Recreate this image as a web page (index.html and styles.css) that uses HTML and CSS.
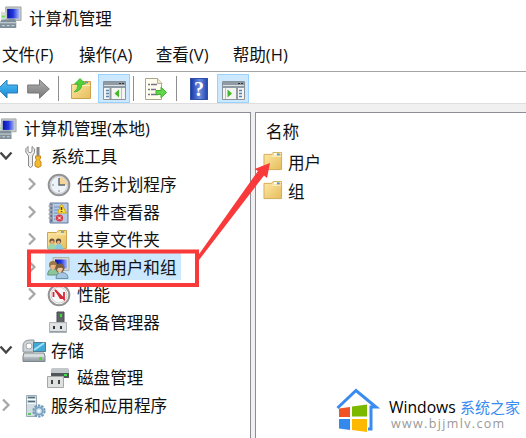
FILE: index.html
```
<!DOCTYPE html>
<html lang="zh-CN">
<head>
<meta charset="utf-8">
<title>计算机管理</title>
<link rel="stylesheet" href="styles.css">
</head>
<body>
<svg class="defs" width="0" height="0">
  <defs>
    <linearGradient id="gold" x1="0" y1="0" x2="1" y2="1"><stop offset="0" stop-color="#ffe9a6"/><stop offset="1" stop-color="#e5bd5c"/></linearGradient>
    <linearGradient id="screen" x1="0" y1="0" x2="1" y2="0"><stop offset="0" stop-color="#0716a8"/><stop offset=".5" stop-color="#2336dc"/><stop offset="1" stop-color="#a5b8fa"/></linearGradient>
    <linearGradient id="steel" x1="0" y1="0" x2="0" y2="1"><stop offset="0" stop-color="#e4e7e9"/><stop offset="1" stop-color="#8c979f"/></linearGradient>
    <linearGradient id="blue" x1="0" y1="0" x2="0" y2="1"><stop offset="0" stop-color="#56c4f5"/><stop offset="1" stop-color="#1685d6"/></linearGradient>
    <linearGradient id="grey" x1="0" y1="0" x2="0" y2="1"><stop offset="0" stop-color="#b0b0b0"/><stop offset="1" stop-color="#777"/></linearGradient>
    <symbol id="computer" viewBox="0 0 24 24">
      <path d="M7 1h16v14H7z" fill="#c9ccc8" stroke="#a0a5a6"/>
      <path d="M8.500 3H21v10H8.500z" fill="url(#screen)"/>
      <path d="M2 6h5v8H2z" fill="#d9ddd8"/><path d="M3 10h3v2H3z" fill="#65e34e"/>
      <path d="M10 14h7v3h-7z" fill="#6e7d85"/>
      <path d="M2 15q0-1 2-1h11q3 0 3 3v6H1v-6z" fill="#80909a"/>
      <path d="M1 17.500h17M3 20.500h3M8 20.500h3M13 20.500h3" stroke="#d7dfe2"/>
    </symbol>
    <symbol id="folder" viewBox="0 0 20 20">
      <path d="M.5 2.500h8l1.500-2h9v18H.5z" fill="url(#gold)" stroke="#d2aa53"/>
      <path d="M8.500 4.500h10M10.500 1.500h8" stroke="#fff3cc"/><path d="M14 1.500h3v2h-3z" fill="#5695be"/><path d="M11 1.500h3v2h-3z" fill="#fff"/>
    </symbol>
    <symbol id="down" viewBox="0 0 14 10"><path d="M1.500 1.500 7 7.500l5.500-6" fill="none" stroke="#444" stroke-width="2.300"/></symbol>
    <symbol id="right" viewBox="0 0 10 14"><path d="m2 1.500 5.500 5.500L2 12.500" fill="none" stroke="#a6a6a6" stroke-width="2.200"/></symbol>
  </defs>
</svg>

<header class="titlebar">
  <svg class="title-icon" width="23" height="23"><use href="#computer"/></svg>
  <span>计算机管理</span>
</header>
<nav class="menu">
  <span>文件<i>(F)</i></span><span>操作<i>(A)</i></span><span>查看<i>(V)</i></span><span>帮助<i>(H)</i></span>
</nav>

<div class="toolbar">
  <svg class="back" width="18" height="20" viewBox="0 0 18 20"><path d="M-2 10 7 1v5h10.500v8H7v5z" fill="url(#blue)" stroke="#287db5"/></svg>
  <svg class="forward" width="23" height="20" viewBox="0 0 23 20"><path d="M22.300 10 12.500.8V6H.7v8h11.800v5.200z" fill="url(#grey)" stroke="#777"/></svg>
  <b class="sep s1"></b>
  <svg class="up" width="20" height="22" viewBox="0 0 20 22"><path d="M.5 6.500h9l2-3h8v17H.5z" fill="url(#gold)" stroke="#cda14c"/><path d="M10 7.500h9" stroke="#fff0b8"/><path d="M14 4.500h3" stroke="#5695be" stroke-width="1.500"/><path d="M3 14q4-2 4-8H3.500L9 .500 14.500 6 11 6.500q-1 7-8 7.500z" fill="#4ed238" stroke="#33a926" stroke-width=".7"/></svg>
  <span class="toggle">
    <svg width="23" height="19" viewBox="0 0 23 19"><path d="M.5.5h22v18H.5z" fill="#f4f4f2" stroke="#8b9298"/><path d="M1 1h21v6H1z" fill="#8e9ba5"/><path d="M1 4.500h21" stroke="#dce1e4"/><path d="M16 2.500h2m1 0h2" stroke="#333"/><path d="M7.500 7v11" stroke="#929a9f" stroke-width="2"/><path d="M3 9.500h3M3 12.500h3M3 15.500h3" stroke="#5484b3" stroke-width="1.500"/><path d="M16 8.500v8l-4.500-4z" fill="#43b929"/><path d="M18.500 7v11" stroke="#bfc2c3"/></svg>
  </span>
  <b class="sep s2"></b>
  <svg class="export" width="22" height="22" viewBox="0 0 22 22"><path d="M.5.500h12l4 4v17H.5z" fill="#fffdee" stroke="#aaa58c"/><path d="M12.500.500v5h5" fill="#eee8cf" stroke="#b5b09a"/><path d="M3 6.500h2m1 0h6M3 11.500h2m1 0h5M3 16.500h2m1 0h7" stroke="#77738a" stroke-width="1.300"/><path d="M11 12.500h5v-3.300l5.500 5.300-5.500 5.300v-3.300h-5z" fill="#62d64b" stroke="#42b22e"/></svg>
  <b class="sep s3"></b>
  <span class="help">?</span>
  <span class="toggle second">
    <svg width="23" height="19" viewBox="0 0 23 19"><path d="M.5.5h22v18H.5z" fill="#f4f4f2" stroke="#8b9298"/><path d="M1 1h21v6H1z" fill="#8e9ba5"/><path d="M1 4.500h21" stroke="#dce1e4"/><path d="M16 2.500h2m1 0h2" stroke="#333"/><path d="M15 7v11" stroke="#929a9f" stroke-width="2"/><path d="M17 9.500h3M17 12.500h3M17 15.500h3" stroke="#5484b3" stroke-width="1.500"/><path d="M5.500 8.500v8l4.500-4z" fill="#43b929"/><path d="M3.500 7v11" stroke="#bfc2c3"/></svg>
  </span>
</div>

<main class="panes">
  <section class="tree">
    <div class="row root"><svg class="root-icon" width="22" height="22"><use href="#computer"/></svg><span>计算机管理<i>(</i>本地<i>)</i></span></div>
    <div class="row group"><svg class="arrow" width="14" height="10"><use href="#down"/></svg>
      <svg class="icon" width="22" height="24" viewBox="0 0 22 24"><path d="M3 1.500v5l2 1.500 2-1.500v-5q4 2 2.500 6L7.500 11v10q-2 3-4 0V11L.8 7Q0 3 3 1.500z" fill="#eee" stroke="#888"/><path d="M11.500 2h3v9h-3z" fill="#888"/><path d="M10.500 11h5v2l-1 2 1.500 2v4q-3 3-6 0v-4l1.500-2-1-2z" fill="#f3b832" stroke="#c98a17"/></svg>
      <span>系统工具</span></div>
    <div class="row child"><svg class="arrow" width="10" height="14"><use href="#right"/></svg>
      <svg class="icon" width="24" height="24" viewBox="0 0 24 24"><circle cx="12" cy="12" r="10.300" fill="#e9edf0" stroke="#929292" stroke-width="2"/><circle cx="12" cy="12" r="8.500" fill="#eef3f9" stroke="#c2c8cd"/><path d="M12 4a8 8 0 0 1 8 8h-8z" fill="#f4d596"/><path d="M12 5v7h6" fill="none" stroke="#566572" stroke-width="1.400"/><path d="M12 19v-2M5 12h2" stroke="#888"/></svg>
      <span>任务计划程序</span></div>
    <div class="row child"><svg class="arrow" width="10" height="14"><use href="#right"/></svg>
      <svg class="icon" width="24" height="24" viewBox="0 0 24 24"><path d="M3 2h18v20H3z" fill="#b5c9e5" stroke="#63799b"/><path d="M7 6h6m-6 3h5m-5 3h5m-5 3h3m-3 3h3" stroke="#6f91bd"/><path d="M4.500 3v18" stroke="#65758a" stroke-width="2"/><path d="M1.500 5h4M1.500 9h4M1.500 13h4M1.500 17h4" stroke="#aaa" stroke-width="1.500"/><path d="m14.500 3 5 9h-9z" fill="#ffe142" stroke="#d8a90c"/><path d="M14.500 6v3m0 1v1" stroke="#473b15" stroke-width="1.500"/><circle cx="12.500" cy="17" r="3.600" fill="#d83943"/><path d="m11 15.500 3 3m0-3-3 3" stroke="#fff"/></svg>
      <span>事件查看器</span></div>
    <div class="row child"><svg class="arrow" width="10" height="14"><use href="#right"/></svg>
      <svg class="icon" width="24" height="24" viewBox="0 0 24 24"><path d="M.5 4.500h9l2-2h8v18H.5z" fill="url(#gold)" stroke="#d0a64c"/><path d="M9 6h10" stroke="#fff0bd"/><path d="M14 4h3" stroke="#5b9bc1" stroke-width="1.500"/><path d="M1 22q0-7 4-6 4-1 5 6z" fill="#9cd8b0"/><path d="M8 22q0-7 4-6 4-1 4 6z" fill="#86cce0"/><circle cx="5" cy="13" r="2.600" fill="#735238"/><circle cx="11.500" cy="13" r="2.600" fill="#594536"/><path d="M5 12.500q2 0 2 1.500l-2 2.500L3 14zm6.500 0q2 0 2 1.500l-2 2.500-2-2.500z" fill="#eab181"/></svg>
      <span>共享文件夹</span></div>
    <div class="row child"><svg class="arrow" width="10" height="14"><use href="#right"/></svg>
      <span class="selected"><svg class="icon" width="24" height="24" viewBox="0 0 24 24"><path d="M6 1.500h16v13H6z" fill="#d7d8ce" stroke="#aeb2ac"/><path d="M8 3.500h12v9H8z" fill="url(#screen)"/><path d="M.7 19q0-6 5-6t6 6z" fill="#8bc69a" stroke="#65957c"/><circle cx="6" cy="9" r="4" fill="#9b7745"/><path d="M4 9q5-1 5 1l-3 5-3-4z" fill="#e9b582"/><path d="M9 22.500q0-6 6-6t6 6z" fill="#a4c8e3" stroke="#6b8eaa"/><circle cx="13" cy="12" r="4.500" fill="#795d3e"/><path d="M11 12q5-1 5 1l-3 5-3-4z" fill="#edc49c"/></svg><span>本地用户和组</span></span></div>
    <div class="row child"><svg class="arrow" width="10" height="14"><use href="#right"/></svg>
      <svg class="icon" width="24" height="24" viewBox="0 0 24 24"><circle cx="12" cy="12" r="10.300" fill="#f8f8f8" stroke="#929292" stroke-width="2"/><circle cx="12" cy="12" r="8" fill="none" stroke="#ccc"/><path d="M6.500 14V9M8 7l9 9V9" fill="none" stroke="#d62835" stroke-width="1.800"/><path d="m7 6 10 10h-4z" fill="#d62835"/></svg>
      <span>性能</span></div>
    <div class="row child"><svg class="arrow blank" width="10" height="14"></svg>
      <svg class="icon" width="24" height="24" viewBox="0 0 24 24"><path d="M10 1h7v12h-7z" fill="#606467" stroke="#44484a"/><path d="M13 3h2v3h-2z" fill="#39d93f"/><path d="M2.500 11.500h17v10h-17z" fill="url(#steel)" stroke="#aeb4b7"/><path d="M3 13h16v7H3z" fill="#e0e3e3"/><path d="M6 15h2v3H6zm7 0h2v3h-2z" fill="#333"/></svg>
      <span>设备管理器</span></div>
    <div class="row group"><svg class="arrow" width="14" height="10"><use href="#down"/></svg>
      <svg class="icon storage" width="24" height="24" viewBox="0 0 24 24"><path d="M1 7q0-6 7-6h4v12H1z" fill="#cbd3d6" stroke="#8e999c"/><circle cx="7" cy="7" r="3" fill="#fff" stroke="#aaa"/><path d="M11.500 3.500h12v9h-12z" fill="#42a9d6" stroke="#527b90"/><path d="M12 11 22 4" stroke="#9ee4fa" stroke-width="2"/><path d="M2 14h20l1 3v5.500H1V17z" fill="url(#steel)" stroke="#7e8789"/><path d="M2 17h20" stroke="#eee"/><path d="M17 18h3v3h-3z" fill="#53d63c"/></svg>
      <span>存储</span></div>
    <div class="row child"><svg class="arrow blank" width="10" height="14"></svg>
      <svg class="icon" width="24" height="24" viewBox="0 0 24 24"><path d="M5 2h16l1 5v5H4V7z" fill="#505659"/><path d="M5 2h16l1 5H4z" fill="#c4c8ca"/><path d="M17 9h3" stroke="#3edf49" stroke-width="2"/><path d="M.5 10.500h16v11H.5z" fill="#dfe0e0" stroke="#a4a8a9"/><path d="M4 14h2v4H4zm7 0h2v4h-2z" fill="#444"/></svg>
      <span>磁盘管理</span></div>
    <div class="row group"><svg class="arrow side" width="10" height="14"><use href="#right"/></svg>
      <svg class="icon" width="22" height="24" viewBox="0 0 22 24"><path d="M1.500 1.500h10v21h-10z" fill="#d2dde2" stroke="#9aabb5"/><path d="M3 3.500h7M3 7.500h7" stroke="#536d7b" stroke-width="1.500"/><path d="M2 5.500h9M2 9.500h9" stroke="#f5fafa"/><path d="M3 20h3" stroke="#61c76b" stroke-width="2"/><circle cx="14" cy="17" r="5.600" fill="none" stroke="#7199ba" stroke-width="2" stroke-dasharray="2.500 1"/><circle cx="14" cy="17" r="3.700" fill="#d2e3ef" stroke="#7ba2c1" stroke-width="2"/><circle cx="14" cy="17" r="1.300" fill="#fff"/></svg>
      <span>服务和应用程序</span></div>
  </section>
  <section class="list">
    <div class="heading">名称</div>
    <div class="item"><svg width="20" height="19"><use href="#folder"/></svg><span>用户</span></div>
    <div class="item"><svg width="20" height="19"><use href="#folder"/></svg><span>组</span></div>
  </section>
</main>

<svg class="marks" width="526" height="438" viewBox="0 0 526 438"><rect x="29" y="251.500" width="168" height="33.500" fill="none" stroke="#f83a3a" stroke-width="4"/><path d="m197 257 61-86-3.500-2 15.500-6-3 15-3-2.500L199 260z" fill="#f83a3a"/></svg>

<aside class="brand">
  <svg width="46" height="46" viewBox="0 0 46 46"><path d="M1.500 21 20 3.500 40 20h-5v22h-3" fill="none" stroke="#398bf0" stroke-width="3"/><path d="m3 21.500 11-1.500v10H3z" fill="#f15324"/><path d="m16 19.500 15-2v12H16z" fill="#7bb900"/><path d="M3 32h11v11L3 41.500z" fill="#3489ed"/><path d="M16 32h15v13l-15-2z" fill="#fdb900"/></svg>
  <div class="brand-text"><div class="brand-name"><span class="latin">Windows</span><span class="cjk">系统之家</span></div><div class="site">www.bjjmlv.com</div></div>
</aside>
</body>
</html>
```
FILE: styles.css
```
* { box-sizing: border-box; }
body { margin: 0; width: 526px; height: 438px; overflow: hidden; position: relative; display: flex; flex-direction: column; background: #fff; color: #111; font: 16.6px/24px "Noto Sans CJK SC", sans-serif; }
svg { display: block; flex: none; overflow: hidden; }
.defs { position: absolute; }
i { font-style: normal; font-family: "Open Sans", "Noto Sans", sans-serif; font-size: 16.5px; }
.titlebar { height: 35px; display: flex; align-items: center; gap: 7px; flex: none; white-space: nowrap; }
.title-icon { margin: -1px 0 0 -1px; }
.menu { height: 36px; display: flex; align-items: center; padding: 3px 0 0 2px; flex: none; white-space: nowrap; }
.menu span { width: 75px; margin-right: 1.900px; flex: none; }
.toolbar { height: 33px; display: flex; align-items: center; flex: none; border-top: 1px solid #a4a4a4; border-bottom: 1px solid #dedede; padding-top: 2px; }
.forward { margin-left: 9px; }
.sep { width: 1px; height: 25px; background: #8e8e8e; flex: none; }
.s1 { margin-left: 8px; }
.up { margin-left: 12px; }
.toggle { width: 32px; height: 29px; margin-left: 7px; display: grid; place-items: center; background: #cce8ff; border: 1px solid #99d1ff; flex: none; padding-top: 4px; }
.s2 { margin-left: 3px; }
.export { margin-left: 11px; }
.s3 { margin-left: 9px; }
.help { width: 18px; height: 22px; margin-left: 13px; background: linear-gradient(90deg,#173aac,#6a8bdd 55%,#2548b1); border: 1px solid #3150a7; color: #fff; text-align: center; font: bold 20px/20px "Liberation Serif", serif; flex: none; }
.toggle.second { margin-left: 9px; }
.panes { flex: 1; min-height: 0; display: grid; grid-template-columns: 251px 1fr; gap: 4px; padding-top: 8px; background: #f0f0f0; }
.tree { background: #fff; border: solid #8b8e96; border-width: 1px 1px 0 0; padding-top: 2px; }
.row { height: 27.600px; display: flex; align-items: center; white-space: nowrap; }
.root-icon { margin: 0 7px 0 -5px; }
.group .icon { width: 22px; margin-right: 4px; }
.group .side { margin-left: 1px; margin-right: 14px; }
.group .arrow:not(.side) { margin-left: -1px; margin-right: 12px; }
.group .icon.storage { margin-left: -3px; margin-right: 5px; width: 24px; }
.child { padding-left: 27px; }
.child .arrow { margin-right: 10px; }
.child .icon { margin-right: 6px; }
.row .icon { position: relative; top: 1px; }
.selected { height: 27px; margin-left: -2px; padding-left: 2px; padding-right: 4px; display: flex; align-items: center; background: #cce8ff; }
.list { background: #fff; border: solid #8b8e96; border-width: 1px 0 0 1px; padding: 4px 0 0 7px; }
.heading { height: 29px; line-height: 28px; padding-left: 3px; }
.item { height: 29.500px; display: flex; align-items: center; gap: 5px; }
.item span { padding-top: 2px; }
.item svg { margin-top: 1px; }
.marks { position: absolute; inset: 0; }
.brand { position: absolute; left: 336px; top: 387px; display: flex; gap: 7px; white-space: nowrap; }
.brand-text { padding-top: 9px; }
.brand-name { height: 22px; display: flex; align-items: center; gap: 4px; }
.latin { font: 15.700px/20px "Open Sans", sans-serif; width: 67px; color: #000; }
.cjk { font-size: 15px; line-height: 20px; color: #398bf0; }
.site { margin: -3px 0 0 2px; font: 12.500px/18px "Open Sans", sans-serif; letter-spacing: 1.350px; color: #999; }
```
